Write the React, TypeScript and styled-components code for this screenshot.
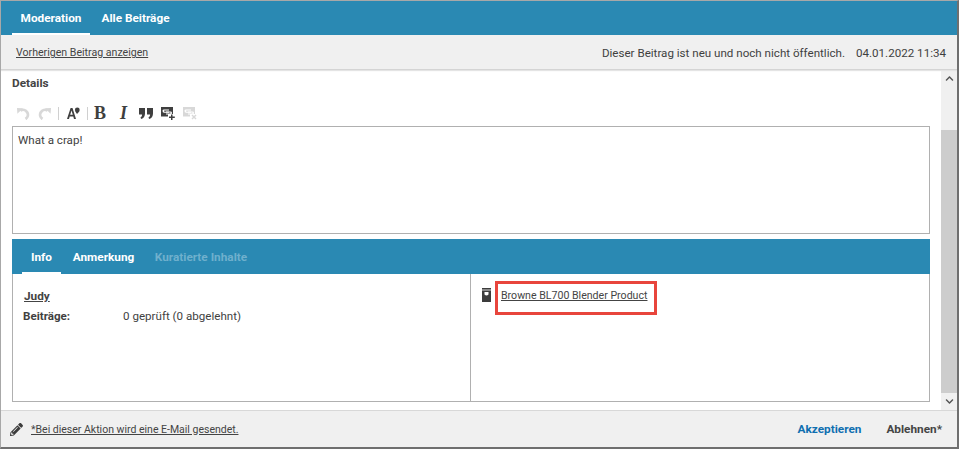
import React from 'react';
import styled, { createGlobalStyle } from 'styled-components';
import { FaChevronDown, FaChevronUp, FaPencilAlt } from 'react-icons/fa';

const GlobalStyle = createGlobalStyle`
  html, body {
    margin: 0;
    padding: 0;
    background: #fff;
  }
  body {
    font-family: Roboto, "Liberation Sans", sans-serif;
    font-size: 11.6px;
    color: #3c3c3c;
  }
`;

const Dialog = styled.div`
  box-sizing: border-box;
  width: 959px;
  height: 449px;
  display: flex;
  flex-direction: column;
  overflow: hidden;
  border-top: 1px solid #a8a8a8;
  border-left: 1px solid #a8a8a8;
  border-right: 2px solid #6f6f6f;
  border-bottom: 2px solid #6f6f6f;
`;

const TabBar = styled.div<{ $inner?: boolean }>`
  flex: none;
  height: ${(p) => (p.$inner ? 35 : 34)}px;
  display: flex;
  background: #2a89b3;
  padding-left: ${(p) => (p.$inner ? 10 : 11)}px;
`;

const Tab = styled.div<{ $active?: boolean; $disabled?: boolean; $width: number }>`
  box-sizing: border-box;
  width: ${(p) => p.$width}px;
  padding-top: 2px;
  display: flex;
  align-items: center;
  justify-content: center;
  font-size: 11.8px;
  font-weight: 700;
  color: ${(p) => (p.$disabled ? '#6fb0cd' : '#fff')};
  border-bottom: 2px solid ${(p) => (p.$active ? '#fff' : 'transparent')};
`;

const SubBar = styled.div`
  flex: none;
  box-sizing: border-box;
  height: 35px;
  display: flex;
  align-items: center;
  justify-content: space-between;
  padding: 1px 11px 0 15px;
  background: #f0f0f0;
  border-bottom: 1px solid #d4d4d4;
  box-shadow: 0 1px 1px #e4e4e4;
  position: relative;
  font-size: 11.6px;
  color: #3f3f3f;
`;

const PlainLink = styled.span`
  font-size: 10.6px;
  color: #444;
  text-decoration: underline;
`;

const Status = styled.div`
  display: flex;
  gap: 11px;
  padding-top: 1px;
`;

const Middle = styled.div`
  flex: 1;
  min-height: 0;
  display: flex;
`;

const Content = styled.div`
  flex: 1;
  min-width: 0;
  padding: 5px 11px 8px 11px;
  display: flex;
  flex-direction: column;
`;

const SectionLabel = styled.div`
  font-size: 11.8px;
  font-weight: 700;
  line-height: 16px;
  color: #444;
`;

const Toolbar = styled.div`
  height: 20px;
  margin-top: 12px;
  margin-bottom: 3px;
  display: flex;
  align-items: center;
  padding-left: 3px;
  color: #3f3f3f;
`;

const ToolSlot = styled.span<{ $width: number; $muted?: boolean }>`
  width: ${(p) => p.$width}px;
  height: 20px;
  display: inline-flex;
  align-items: center;
  justify-content: center;
  color: ${(p) => (p.$muted ? '#d8d8d8' : '#3f3f3f')};
`;

const ToolDivider = styled.span`
  width: 1px;
  height: 13px;
  background: #d0d0d0;
`;

const SerifGlyph = styled.span<{ $italic?: boolean }>`
  font-family: "Liberation Serif", serif;
  font-size: 18px;
  font-weight: 700;
  font-style: ${(p) => (p.$italic ? 'italic' : 'normal')};
  line-height: 20px;
`;

const Editor = styled.div`
  flex: none;
  box-sizing: border-box;
  height: 108px;
  padding: 5px;
  font-size: 11.6px;
  line-height: 16px;
  color: #3f3f3f;
  border: 1px solid #b0b0b0;
`;

const InfoPanel = styled.div`
  margin-top: 5px;
  flex: 1;
  display: flex;
  flex-direction: column;
`;

const InfoBody = styled.div`
  flex: 1;
  display: grid;
  grid-template-columns: 457px 1fr;
  border: 1px solid #b0b0b0;
  border-top: 0;
`;

const InfoColumn = styled.div`
  padding: 14px 10px;
  & + & {
    border-left: 1px solid #b0b0b0;
  }
`;

const UserName = styled.div`
  margin-left: 1px;
  font-size: 11.8px;
  font-weight: 700;
  line-height: 16px;
  text-decoration: underline;
  color: #444;
`;

const StatRow = styled.div`
  margin-top: 4px;
  display: grid;
  grid-template-columns: 100px 1fr;
  line-height: 16px;
  color: #3f3f3f;
`;

const StatName = styled.span`
  font-weight: 700;
`;

const ProductRow = styled.div`
  position: relative;
  display: flex;
  align-items: center;
  gap: 10px;
  height: 16px;
  margin-top: -1px;
  margin-left: 1px;
`;

const Highlight = styled.div`
  position: absolute;
  left: 13px;
  top: -6px;
  width: 162px;
  height: 34px;
  box-sizing: border-box;
  border: 3px solid #e8453c;
`;

const Scrollbar = styled.div`
  flex: none;
  width: 16px;
  display: flex;
  flex-direction: column;
  background: #f0f0f0;
  color: #555;
`;

const ScrollArrow = styled.div`
  flex: none;
  height: 17px;
  display: flex;
  align-items: center;
  justify-content: center;
`;

const ScrollThumb = styled.div`
  flex: 1;
  margin-top: 43px;
  background: #cdcdcd;
`;

const Footer = styled.div`
  flex: none;
  box-sizing: border-box;
  height: 37px;
  display: flex;
  align-items: center;
  padding: 0 15px 0 9px;
  background: #f0f0f0;
  border-top: 1px solid #d8d8d8;
`;

const FooterNote = styled.span`
  margin-left: 8px;
  flex: 1;
  font-size: 10.5px;
  color: #444;
  text-decoration: underline;
`;

const FooterAction = styled.span<{ $primary?: boolean }>`
  margin-left: 25px;
  font-size: 11.8px;
  font-weight: 700;
  color: ${(p) => (p.$primary ? '#0f6fb0' : '#444')};
`;

function HistoryIcon({ flip }: { flip?: boolean }) {
  return (
    <svg width="13" height="13" viewBox="0 0 13 13" transform={flip ? 'scale(-1 1)' : undefined}>
      <path d="M3.4 3.600A4.700 4.700 0 1 1 8.500 12" fill="none" stroke="currentColor" strokeWidth="2.800" />
      <path d="M0 1l6 .2L.4 6.800Z" fill="currentColor" />
    </svg>
  );
}

function FontSizeIcon() {
  return (
    <svg width="13" height="12" viewBox="0 0 13 12" fill="currentColor">
      <path d="M0 12 3.600 1h1.900L9 12H7l-.7-2.600H2.700L2 12Zm3.200-4.200h2.600L4.500 3.400Z" />
      <circle cx="10.300" cy="3" r="2.400" />
      <path d="M8.300 4.500h4L10 7Z" />
    </svg>
  );
}

function QuoteIcon() {
  return (
    <svg width="14" height="11" viewBox="0 0 14 11" fill="currentColor">
      <path d="M0 0h6v5.400C6 8 4.800 10 2.200 11l-.8-1.400C2.600 9 3.100 8 3.100 6.600H0Z" />
      <path d="M8 0h6v5.400c0 2.600-1.200 4.600-3.800 5.600l-.8-1.400c1.200-.6 1.700-1.600 1.700-3H8Z" />
    </svg>
  );
}

function LinkIcon({ remove }: { remove?: boolean }) {
  return (
    <svg width="14" height="13" viewBox="0 0 14 13" fill="currentColor">
      <path d="M0 0h12v9.500H0Z" />
      <path d="M1.500 3.800Q1.500 2.500 3 2.500h5v1.100H3.200v1.200H8V5.800H3Q1.500 5.800 1.500 3.800Z" fill="#fff" />
      <path d="M5 4.600h4.500q1.500 0 1.500 1.400t-1.500 1.500H5V6.500h4.500V5.600H5Z" fill="#fff" />
      <path d="M7 7h7v6H7Z" fill="#fff" />
      {remove ? (
        <path d="m8.500 8.500 1-1 1.500 1.500 1.500-1.500 1 1L12 10l1.500 1.500-1 1L11 11l-1.500 1.500-1-1L10 10Z" />
      ) : (
        <path d="M10 7.500h1.500V9.500H13.800V11H11.500V13H10V11H8V9.500H10Z" />
      )}
    </svg>
  );
}

function ProductIcon() {
  return (
    <svg width="9" height="14" viewBox="0 0 9 14">
      <path d="M0 0h9v14H0Z" fill="#3c3c3c" />
      <path d="M0 2h9" stroke="#fff" strokeWidth="0.8" />
      <path d="M2.500 4h4v2.500q-2 2-4 0Z" fill="#fff" />
    </svg>
  );
}

export default function App() {
  return (
    <>
      <GlobalStyle />
      <Dialog>
        <TabBar>
          <Tab $active $width={78}>Moderation</Tab>
          <Tab $width={91}>Alle Beiträge</Tab>
        </TabBar>
        <SubBar>
          <PlainLink>Vorherigen Beitrag anzeigen</PlainLink>
          <Status>
            <span>Dieser Beitrag ist neu und noch nicht öffentlich.</span>
            <span>04.01.2022 11:34</span>
          </Status>
        </SubBar>
        <Middle>
          <Content>
            <SectionLabel>Details</SectionLabel>
            <Toolbar>
              <ToolSlot $width={16} $muted><HistoryIcon /></ToolSlot>
              <ToolSlot $width={27} $muted><HistoryIcon flip /></ToolSlot>
              <ToolDivider />
              <ToolSlot $width={28}><FontSizeIcon /></ToolSlot>
              <ToolDivider />
              <ToolSlot $width={24}><SerifGlyph>B</SerifGlyph></ToolSlot>
              <ToolSlot $width={23}><SerifGlyph $italic>I</SerifGlyph></ToolSlot>
              <ToolSlot $width={21}><QuoteIcon /></ToolSlot>
              <ToolSlot $width={23}><LinkIcon /></ToolSlot>
              <ToolSlot $width={21} $muted><LinkIcon remove /></ToolSlot>
            </Toolbar>
            <Editor>What a crap!</Editor>
            <InfoPanel>
              <TabBar $inner>
                <Tab $active $width={39}>Info</Tab>
                <Tab $width={85}>Anmerkung</Tab>
                <Tab $disabled $width={110}>Kuratierte Inhalte</Tab>
              </TabBar>
              <InfoBody>
                <InfoColumn>
                  <UserName>Judy</UserName>
                  <StatRow>
                    <StatName>Beiträge:</StatName>
                    <span>0 geprüft (0 abgelehnt)</span>
                  </StatRow>
                </InfoColumn>
                <InfoColumn>
                  <ProductRow>
                    <ProductIcon />
                    <PlainLink>Browne BL700 Blender Product</PlainLink>
                    <Highlight />
                  </ProductRow>
                </InfoColumn>
              </InfoBody>
            </InfoPanel>
          </Content>
          <Scrollbar>
            <ScrollArrow><FaChevronUp size={9} /></ScrollArrow>
            <ScrollThumb />
            <ScrollArrow><FaChevronDown size={9} /></ScrollArrow>
          </Scrollbar>
        </Middle>
        <Footer>
          <FaPencilAlt size={13} />
          <FooterNote>*Bei dieser Aktion wird eine E-Mail gesendet.</FooterNote>
          <FooterAction $primary>Akzeptieren</FooterAction>
          <FooterAction>Ablehnen*</FooterAction>
        </Footer>
      </Dialog>
    </>
  );
}
